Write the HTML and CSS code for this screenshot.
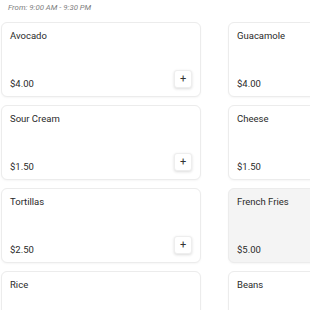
FILE: index.html
```html
<!DOCTYPE html>
<html lang="en">
  <head>
    <meta charset="UTF-8" />
    <meta name="viewport" content="width=device-width, initial-scale=1.0" />
    <title>Extras</title>
    <link rel="stylesheet" href="styles.css">
  </head>
  <body>
    <div class="hours">From: 9:00 AM - 9:30 PM</div>
    <div class="item-grid">
      <div class="item-card">
        <div class="item-name">Avocado</div>
        <div class="item-bottom">
          <span class="item-price">$4.00</span>
          <button class="add-btn">+</button>
        </div>
      </div>
      <div class="item-card">
        <div class="item-name">Guacamole</div>
        <div class="item-bottom">
          <span class="item-price">$4.00</span>
          <button class="add-btn">+</button>
        </div>
      </div>
      <div class="item-card">
        <div class="item-name">Sour Cream</div>
        <div class="item-bottom">
          <span class="item-price">$1.50</span>
          <button class="add-btn">+</button>
        </div>
      </div>
      <div class="item-card">
        <div class="item-name">Cheese</div>
        <div class="item-bottom">
          <span class="item-price">$1.50</span>
          <button class="add-btn">+</button>
        </div>
      </div>
      <div class="item-card">
        <div class="item-name">Tortillas</div>
        <div class="item-bottom">
          <span class="item-price">$2.50</span>
          <button class="add-btn">+</button>
        </div>
      </div>
      <div class="item-card active">
        <div class="item-name">French Fries</div>
        <div class="item-bottom">
          <span class="item-price">$5.00</span>
          <button class="add-btn">+</button>
        </div>
      </div>
      <div class="item-card">
        <div class="item-name">Rice</div>
        <div class="item-bottom">
          <span class="item-price">$3.00</span>
          <button class="add-btn">+</button>
        </div>
      </div>
      <div class="item-card">
        <div class="item-name">Beans</div>
        <div class="item-bottom">
          <span class="item-price">$3.00</span>
          <button class="add-btn">+</button>
        </div>
      </div>
    </div>
  </body>
</html>
```

FILE: styles.css
```css
* {
  margin: 0;
  padding: 0;
  box-sizing: border-box;
}

body {
  font-family: Roboto, "Liberation Sans", sans-serif;
  background-color: #fff;
  color: #2a2a2a;
  padding: 3px 0 0 1px;
}

.hours {
  font-size: 7.8px;
  font-style: italic;
  color: #808080;
  padding-left: 7px;
  height: 19px;
  line-height: 10px;
}

.item-grid {
  display: grid;
  grid-template-columns: 200px 200px;
  column-gap: 27px;
  row-gap: 8px;
}

.item-card {
  height: 75px;
  background: #fff;
  border: 1px solid #ececec;
  border-radius: 6px;
  box-shadow: 0 1px 2px rgba(0, 0, 0, 0.04);
  padding: 7px 8px 6px 8px;
  display: flex;
  flex-direction: column;
  justify-content: space-between;
}

.item-card.active {
  background: #f4f4f4;
}

.item-card.active .add-btn {
  display: none;
}

.item-name {
  font-size: 9.5px;
  line-height: 12px;
}

.item-bottom {
  display: flex;
  justify-content: space-between;
  align-items: flex-end;
}

.item-price {
  font-size: 9.5px;
  line-height: 12px;
}

.add-btn {
  width: 18px;
  height: 18px;
  margin-bottom: 2px;
  background: #fff;
  border: 1px solid #eee;
  border-radius: 3px;
  box-shadow: 0 1px 3px rgba(0, 0, 0, 0.14);
  font-family: Roboto, sans-serif;
  font-size: 11px;
  line-height: 16px;
  color: #333;
  cursor: pointer;
}
```
